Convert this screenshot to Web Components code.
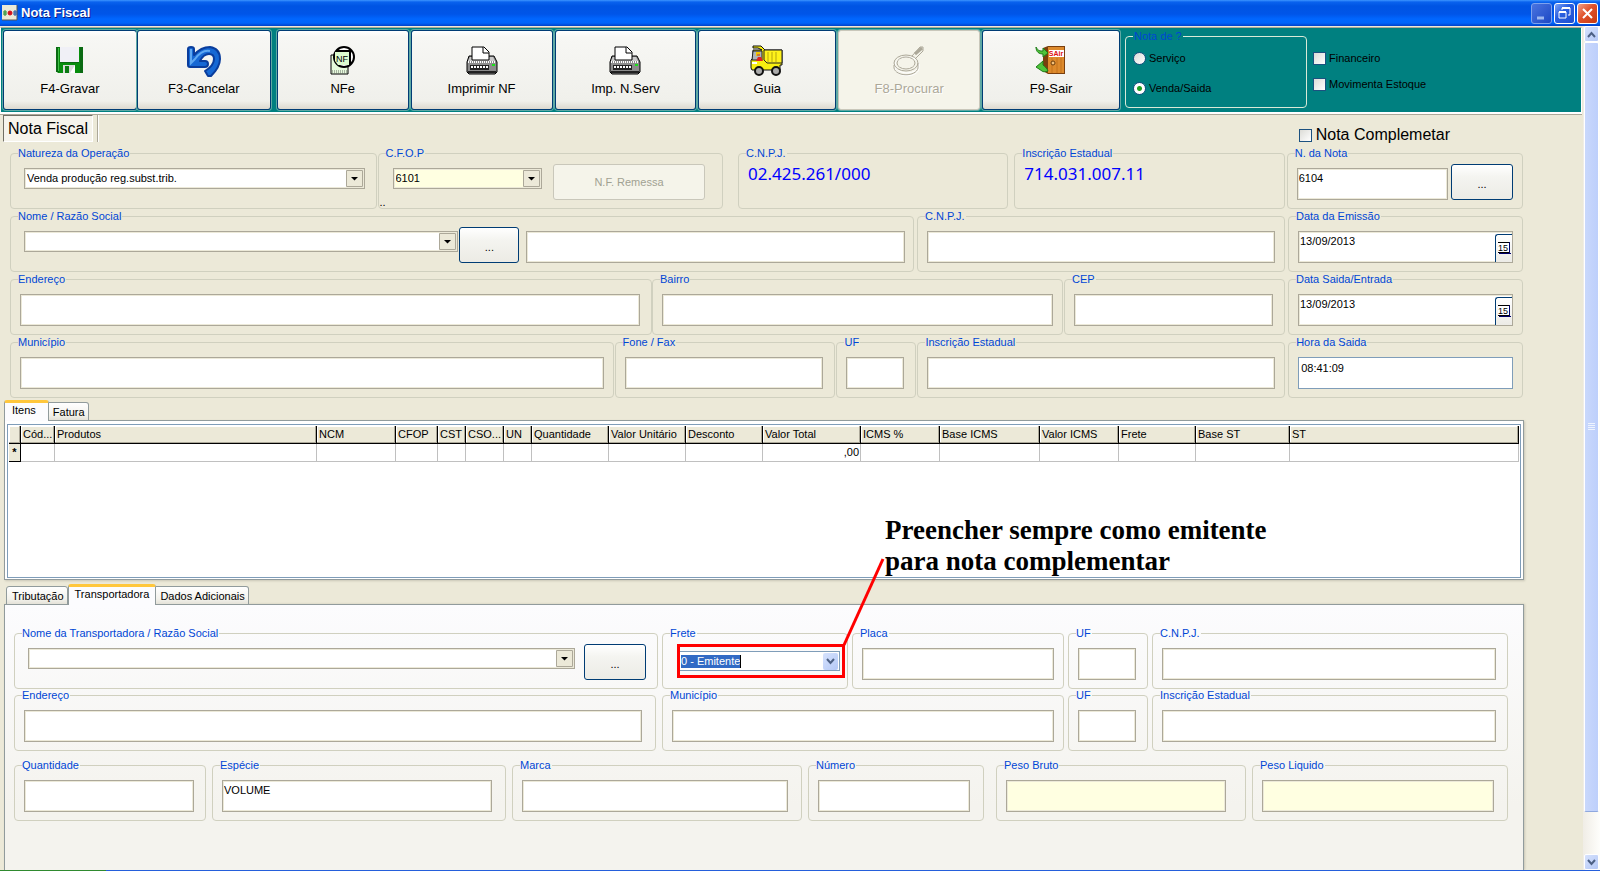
<!DOCTYPE html>
<html lang="pt-BR">
<head>
<meta charset="utf-8">
<title>Nota Fiscal</title>
<style>
html, body { margin: 0; height: 100%; }
body { font: 11px/13px "Liberation Sans", Arial, sans-serif; color: #000; background: #ece9d8; }
</style>
</head>
<body>
<nota-window></nota-window>

<script>
const define = (name, html, setup) => {
  const tpl = document.createElement('template');
  tpl.innerHTML = html;
  customElements.define(name, class extends HTMLElement {
    constructor() {
      super();
      this.attachShadow({ mode: 'open' });
    }
    connectedCallback() {
      if (this.shadowRoot.childNodes.length) return;
      this.shadowRoot.append(tpl.content.cloneNode(true));
      if (setup) setup(this, this.shadowRoot);
    }
  });
};

const ICONS = {
  save: `<svg width="28" height="30" viewBox="0 0 28 30"><path d="M0 2h27v26H2l-2-2z" fill="#078d0d"/><path d="M0 2h3v25H0zM24 2h3v26h-3z" fill="#0a6a12"/><path d="M2 3h1v23H2z" fill="#41c04a"/><path d="M4 2h19v15H4z" fill="#f0f0f6"/><path d="M4 17h19v1H4z" fill="#0a6a12"/><path d="M7 20h12v8H7z" fill="#d9dad9"/><path d="M9 21h4v7H9z" fill="#0a7a12"/><path d="M14 28l5-8v8z" fill="#fff"/></svg>`,
  undo: `<svg width="34" height="32" viewBox="0 0 34 32"><path d="M1 4q0-2 3-2t3 2v6C13 3 18 2 23 2c7 1 10 6 10 12 0 7-4 12-9 17h-3l-3-5c5-3 9-7 9-12 0-3-2-5-5-5-4 0-7 3-9 7h5q3 0 3 3t-3 3H3q-2 0-2-2z" fill="#1668d4" stroke="#0a3d9c" stroke-width="2" stroke-linejoin="round"/><path d="M4 4v14l4-4c5-7 10-9 15-8" fill="none" stroke="#5fa8f2" stroke-width="2"/></svg>`,
  nfe: `<svg width="26" height="30" viewBox="0 0 26 30"><path d="M1 10h17v19H1z" fill="#e6fbdc" stroke="#000"/><path d="M2 26h15M2 28h15" stroke="#666" stroke-dasharray="1 1"/><circle cx="14" cy="12" r="10" fill="#fff" stroke="#000" stroke-width="2"/><path d="M5 7h14v13H8l-3-4z" fill="#dcfccf"/><path d="M6 6h14v14" fill="none" stroke="#000" stroke-width="2"/><text x="12" y="17" text-anchor="middle" font-family="Liberation Sans, sans-serif" font-size="9" fill="#000">NF</text></svg>`,
  printer: `<svg width="32" height="30" viewBox="0 0 32 30"><path d="M3 11h25l3 6v10l-2 2H3l-2-2V17z" fill="#8c8c8c" stroke="#000"/><path d="M4 12h23l2 4H2z" fill="#c9c9c9"/><path d="M6 15V2h12l5 5v8z" fill="#fff" stroke="#000"/><path d="M17 2v6h6" fill="#fff" stroke="#000"/><path d="M2 17h28" stroke="#fff" stroke-dasharray="1 1" stroke-width="2"/><path d="M4 20h19v5H4z" fill="#222"/><path d="M5 22h17" stroke="#fff" stroke-width="2" stroke-dasharray="2 1"/><path d="M26 19h3v2h-3z" fill="#1ae01a"/><path d="M2 27h28" stroke="#222" stroke-width="2"/></svg>`,
  truck: `<svg width="34" height="32" viewBox="0 0 34 32"><path d="M3 1h8l4 4h17v15h-2v5H2l-1-2v-8l2-2V5h9L8 3H3z" fill="#f8ee10" stroke="#111"/><path d="M14 5h18v13H17l-3-3z" fill="#fff21a" stroke="#222"/><path d="M18 7v10M22 7v10M26 7v10" stroke="#b5a510"/><path d="M3 6h9v9H2z" fill="#aeb4b8" stroke="#222"/><path d="M8 12h3l2 4H6z" fill="#e02020"/><path d="M6 7h4v4H6z" fill="#f2c600"/><path d="M7 9h3v2H7z" fill="#c87a3a"/><path d="M2 17h5v2H2z" fill="#fff"/><circle cx="9" cy="26" r="4" fill="#aaa" stroke="#111" stroke-width="2"/><circle cx="26" cy="26" r="4" fill="#aaa" stroke="#111" stroke-width="2"/></svg>`,
  search: `<svg width="34" height="32" viewBox="0 0 34 32"><g id="g" fill="none" stroke="#fff" transform="translate(1 1)"><ellipse cx="14" cy="19" rx="12" ry="8"/><path d="M2 20v3c2 9 22 9 24 0v-5"/></g><g fill="none" stroke="#aca899"><ellipse cx="14" cy="18" rx="12" ry="8"/><ellipse cx="14" cy="18" rx="9" ry="6"/><path d="M2 20v3c2 9 22 9 24 0v-5"/><path d="M20 11l8-9h3v4l-8 8"/><path d="M23 9l7-6" stroke-width="3"/></g></svg>`,
  exit: `<svg width="32" height="32" viewBox="0 0 32 32"><path d="M8 3l5-2h17v28H13l-5-3z" fill="#7a3f0e"/><path d="M13 2h16v26H13z" fill="#dd8a2c"/><path d="M17 13v15M22 13v15M26 13v15" stroke="#c4721a"/><path d="M14 5h15v7H14z" fill="#fff"/><text x="21" y="11" text-anchor="middle" font-family="Liberation Sans, sans-serif" font-weight="bold" font-size="7" fill="#e01010">SAir</text><circle cx="18" cy="18" r="2" fill="#f5c27a" stroke="#6a3a0a"/><path d="M1 2c2 4 4 4 7 4V3l5 5-5 4V9C4 9 1 7 1 2zM13 26c-3 1-5 1-6 0l-6-4 7-6v4c2 2 4 3 5 6z" fill="#4fc43a" stroke="#1f7d1a"/></svg>`
};

/* Blue caption bar with the three window buttons */
define('title-bar', `
<style>
:host { display: flex; align-items: center; height: 26px; padding: 0 2px; box-sizing: border-box; flex: none;
  background: linear-gradient(#3d95ff 0, #0a62ee 2px, #0054e3 6px, #0055e8 14px, #0066ff 19px, #0064fa 23px, #0040c8 26px); }
h1 { margin: 0 auto 0 3px; font: bold 13px/18px "Liberation Sans", Arial, sans-serif; color: #fff; text-shadow: 1px 1px #0a1883; }
button { width: 21px; height: 21px; padding: 0; margin-left: 2px; border: 1px solid #fff; border-radius: 3px;
  background: linear-gradient(135deg, #7fa5f5, #2a5fe0 40%, #1d4fd0); display: grid; place-items: center; }
.min { background: linear-gradient(135deg, #4a74e0, #1c48c4); border-color: #7da2ee; }
.close { background: linear-gradient(135deg, #f0a088, #e0512a 45%, #c63a12); }
svg { display: block; }
</style>
<svg width="16" height="16" viewBox="0 0 16 16"><path d="M0 0h15v15H0z" fill="#ece9d8"/><path d="M15 0v15H0" fill="none" stroke="#555"/><path d="M3 5v6M1 7h4M1 9h4" stroke="#1d8a2a"/><circle cx="8" cy="8" r="2" fill="#d4101c" stroke="#d4101c"/><path d="M13 5v6M11 7h4M11 9h4" stroke="#1a4fa0"/></svg>
<h1><slot></slot></h1>
<button class="min" aria-label="Minimizar"><svg width="15" height="15"><path d="M3 12h7" stroke="#9db8f0" stroke-width="3"/></svg></button>
<button aria-label="Restaurar"><svg width="15" height="15" fill="none" stroke="#fff"><path d="M5 4V2h8v7h-2"/><path d="M5 2h8" stroke-width="2"/><path d="M2 6h7v6H2z"/><path d="M2 6h7" stroke-width="2"/></svg></button>
<button class="close" aria-label="Fechar"><svg width="15" height="15" stroke="#fff" stroke-width="2"><path d="M3 3l9 9M12 3l-9 9"/></svg></button>`);

/* Large toolbar button: icon over caption */
define('tool-button', `
<style>
:host { display: block; flex: var(--w) 1 0; min-width: 0; margin-left: var(--gap, 2px); }
button { width: 100%; height: 80px; padding: 14px 0 0; display: flex; flex-direction: column; align-items: center;
  font: 13px/16px "Liberation Sans", Arial, sans-serif; color: #000; border: 1px solid #003c74; border-radius: 3px;
  background: linear-gradient(#fff 0, #f7f7f4 6px, #f0f0eb 70px, #dcd9cf 78px); box-shadow: 0 0 0 1px #5fa9a4; box-sizing: border-box; }
button:disabled { color: #aca899; text-shadow: 1px 1px #fff; background: #f5f4ea; border-color: #c9c7ba; }
.icon { height: 36px; display: flex; align-items: flex-start; justify-content: center; }
</style>
<button><span class="icon"></span><slot></slot></button>`,
(el, root) => {
  root.querySelector('.icon').innerHTML = ICONS[el.getAttribute('icon')];
  root.querySelector('button').disabled = el.hasAttribute('disabled');
});

/* Tick box or radio with its caption */
define('xp-choice', `
<style>
:host { display: block; }
label { display: flex; align-items: center; gap: var(--choice-gap, 3px); }
input { appearance: none; margin: 0; width: 13px; height: 13px; flex: none; box-sizing: border-box;
  border: 1px solid #1c5180; background: linear-gradient(135deg, #dcdcd7, #fff); }
input[type=radio] { border-radius: 50%; }
input[type=radio]:checked { background: radial-gradient(circle, #21a121 0 2px, #fff 3px); }
</style>
<label><input><slot></slot></label>`,
(el, root) => {
  const i = root.querySelector('input');
  i.type = el.getAttribute('type');
  i.checked = el.hasAttribute('checked');
});

/* Bordered push button */
define('xp-button', `
<style>
:host { display: block; flex: none; width: 62px; margin-top: -4px; }
button { width: 100%; height: 36px; padding: 4px 0 0; font: inherit; line-height: 13px; color: #000;
  border: 1px solid #003c74; border-radius: 3px; background: linear-gradient(#fff, #f4f4f0 12px, #ecebe5); }
button:disabled { color: #a1a192; border-color: #c9c7ba; background: #f5f4ea; padding: 0; }
</style>
<button><slot></slot></button>`,
(el, root) => { root.querySelector('button').disabled = el.hasAttribute('disabled'); });

/* Captioned group holding one control, with a slot for whatever follows it */
define('nf-field', `
<style>
:host { display: block; position: relative; flex: var(--w) 1 0; min-width: 0; margin-left: var(--gap, 1px); }
fieldset { margin: 0; min-width: 0; height: 62px; box-sizing: border-box; padding: 8px var(--end, 11px) 0 7px;
  border: 1px solid #d0d0bf; border-radius: 4px; }
legend { padding: 0 1px 0 0; height: 13px; line-height: 13px; color: #0046d5; white-space: nowrap; }
.body { display: flex; align-items: flex-start; padding-left: var(--start, 2px); }
input.box { flex: 1; min-width: 0; width: 0; height: 32px; box-sizing: border-box; margin: 0; padding: 2px 2px 14px 1px; font: inherit; line-height: 14px;
  color: #000; background: #fff; border: 1px solid #aca899; box-shadow: inset 0 0 0 1px #ece9d8; border-radius: 0; outline: 0; }
:host([tone=cream]) input.box, :host([tone=cream]) .combo { background: #ffffe1; }
:host([tone=blue]) input.box { border-color: #7f9db9; box-shadow: none; padding: 3px 3px 13px 2px; }
.combo { flex: var(--cw, 1) 1 0; min-width: 0; display: flex; height: 21px; box-sizing: border-box; border: 1px solid #aca899; background: #fff;
  box-shadow: inset 0 0 0 1px #ece9d8; position: relative; }
select { appearance: none; flex: 1; min-width: 0; border: 0; margin: 0; padding: 0 20px 0 2px; background: transparent; font: inherit; color: #000; }
.combo svg { position: absolute; right: 1px; top: 1px; pointer-events: none; }
.date { flex: 1; display: flex; position: relative; }
.date button { position: absolute; right: 1px; top: 3px; width: 17px; height: 28px; padding: 0; border: 1px solid #003c74; border-width: 1px 0 0 1px; border-radius: 3px 0 0 0;
  background: linear-gradient(#fff, #ecebe6); display: grid; place-items: center; }
.mark { flex: 1; box-sizing: border-box; height: 34px; margin: -4px 0 0; padding: 4px 2px 4px 0; border: 3px solid #f00; display: flex; }
.edit { flex: 1; display: flex; align-items: center; height: 20px; box-sizing: border-box; border: 1px solid #7f9db9; border-left: 0; background: #fff; padding: 0 1px; }
.edit input { field-sizing: content; width: auto; margin: 0 auto 0 0; padding: 0; border: 0; border-right: 1px solid #000; background: #316ac5; color: #fff; font: inherit; outline: 0; }
.edit button { width: 15px; height: 17px; padding: 0; border: 0; border-radius: 2px; background: linear-gradient(135deg, #d6e2fd, #b4c8f6); display: grid; place-items: center; }
.body:has(output) { margin-top: -4px; }
output { font: 17px/20px "Noto Sans", sans-serif; color: #00f; white-space: nowrap; }
</style>
<fieldset><legend><label for="c"></label></legend><div class="body"><slot></slot></div></fieldset>
<slot name="note"></slot>`,
(el, root) => {
  const v = el.getAttribute('value') || '';
  const kinds = {
    input: `<input class="box" id="c" value="${v}">`,
    combo: `<span class="combo"><select id="c"><option>${v}</option></select><svg width="17" height="17"><path d="M.5.5h16v16H.5z" fill="#ece9d8" stroke="#aca899"/><path d="M5 7h7L8.500 10.500z" fill="#000"/></svg></span>`,
    date: `<span class="date"><input class="box" id="c" value="${v}"><button aria-label="Calendário"><svg width="13" height="13"><path d="M0 0h11v12H0z" fill="#fff"/><path d="M0 .5h12M0 10.500h12" stroke="#000"/><path d="M1 11.500h12M11.500 0v12" stroke="#00006a"/><text x="5" y="9" text-anchor="middle" font-size="9" font-family="Liberation Sans, sans-serif">15</text></svg></button></span>`,
    edit: `<span class="mark"><span class="edit"><input id="c" role="combobox" aria-expanded="false" aria-controls="c" value="${v}"><button aria-label="Abrir lista"><svg width="9" height="7" fill="none" stroke="#4d6185" stroke-width="2"><path d="M1 1l3.500 4L8 1"/></svg></button></span></span>`,
    output: `<output id="c">${v}</output>`
  };
  root.querySelector('label').textContent = el.getAttribute('label');
  root.querySelector('.body').insertAdjacentHTML('afterbegin', kinds[el.getAttribute('kind') || 'input']);
});

define('field-row', `
<style>:host { display: flex; align-items: flex-start; }</style><slot></slot>`);

/* Row of page tabs above a panel */
define('tab-strip', `
<style>
:host { display: block; }
div { display: flex; align-items: flex-end; height: 21px; padding-left: var(--inset, 0); position: relative; z-index: 1; margin-bottom: -1px; }
button { height: 19px; box-sizing: border-box; padding: 2px 3px 0 4px; font: inherit; line-height: 13px; color: #000; white-space: nowrap;
  border: 1px solid #919b9c; border-left-width: 0; border-radius: 0 3px 0 0; background: linear-gradient(#fff, #f3f2ec 12px, #e4e2d8); }
button:first-child { border-left-width: 1px; padding-left: 5px; border-radius: 3px 3px 0 0; }
button[aria-selected=true] { height: 21px; padding: 0 6px 4px; border: 1px solid #919b9c; border-bottom: 0; border-top: 3px solid #ffc73c; border-radius: 3px 3px 0 0;
  background: #fcfcfe; box-shadow: inset 0 1px #fcfcfe; }
button[aria-selected=true]:first-child { padding: 0 12px 4px 7px; }
</style>
<div role="tablist"></div>`,
(el, root) => {
  const on = +el.getAttribute('selected');
  root.querySelector('div').innerHTML = el.getAttribute('tabs').split('|')
    .map((t, i) => `<button role="tab" aria-selected="${i === on}">${t}</button>`).join('');
});

/* Item grid */
define('item-grid', `
<style>
:host { display: block; height: 160px; box-sizing: border-box; padding: 3px 2px; border: 1px solid #919b9c; background: #fff; box-shadow: 1px 1px 2px #c9c6b6; }
.frame { height: 154px; box-sizing: border-box; border: 1px solid #7f9db9; padding: 1px; }
table { width: 100%; border-collapse: separate; border-spacing: 0; table-layout: fixed; }
th, td { box-sizing: border-box; padding: 0 1px 0 2px; text-align: left; font-weight: normal; white-space: nowrap; overflow: hidden; text-overflow: clip; }
th { height: 18px; background: #ece9d8; border-right: 1px solid #000; border-bottom: 1px solid #000; box-shadow: inset -1px -1px #aca899, inset 1px 1px #fff; }
td { height: 18px; border-right: 1px solid #c0c0c0; border-bottom: 1px solid #c0c0c0; }
td:first-child { background: #ece9d8; border-color: #000; text-align: center; font-weight: bold; padding: 0; }
.num { text-align: right; }
</style>
<div class="frame"><table><colgroup></colgroup><thead><tr></tr></thead><tbody><tr></tr></tbody></table></div>`,
(el, root) => {
  const cols = [['', 12], ['Cód...', 34], ['Produtos', 262], ['NCM', 79], ['CFOP', 42], ['CST', 28], ['CSO...', 38], ['UN', 28],
    ['Quantidade', 77], ['Valor Unitário', 77], ['Desconto', 77], ['Valor Total', 98], ['ICMS %', 79], ['Base ICMS', 100],
    ['Valor ICMS', 79], ['Frete', 77], ['Base ST', 94], ['ST', 229]];
  root.querySelector('colgroup').innerHTML = cols.map(c => `<col style="width:${c[1]}px">`).join('');
  root.querySelector('thead tr').innerHTML = cols.map(c => `<th>${c[0]}</th>`).join('');
  root.querySelector('tbody tr').innerHTML = cols.map((c, i) =>
    i === 0 ? '<td>*</td>' : c[0] === 'Valor Total' ? '<td class="num">,00</td>' : '<td></td>').join('');
});

/* Red leader line and remark attached to a field */
define('nota-callout', `
<style>
:host { position: absolute; left: 0; top: 0; z-index: 2; pointer-events: none; }
svg { position: absolute; left: 179px; top: -70px; }
p { position: absolute; left: 223px; top: -112px; margin: 0; font: bold 27px/31px "Liberation Serif", "Times New Roman", serif; color: #000; white-space: nowrap; }
</style>
<svg width="44" height="90"><path d="M42 2L3 88" stroke="#f00" stroke-width="3"/></svg>
<p><slot></slot></p>`);

define('xp-scrollbar', `
<style>
:host { display: flex; flex-direction: column; width: 17px; flex: none; box-sizing: border-box; padding: 0 1px; background: linear-gradient(90deg, #f0ede6, #fefefb); }
button { width: 15px; height: 16px; flex: none; padding: 0; border: 1px solid #fff; border-radius: 2px; background: linear-gradient(135deg, #d6e2fd, #b4c8f6); display: grid; place-items: center; }
.track { flex: 1; display: flex; flex-direction: column; }
.thumb { flex: 768 1 0; box-sizing: border-box; border: 1px solid #fff; border-bottom-color: #8fa8de; border-radius: 2px; background: linear-gradient(90deg, #c9d8fc, #bdcffb); display: grid; place-items: center; }
.rest { flex: 42 1 0; }
</style>
<button aria-label="Para cima"><svg width="9" height="7" fill="none" stroke="#4d6185" stroke-width="2"><path d="M1 6l3.500-4L8 6"/></svg></button>
<div class="track"><div class="thumb"><svg width="7" height="8" stroke="#eef4fe"><path d="M0 .5h7M0 2.500h7M0 4.500h7M0 6.500h7"/></svg></div><div class="rest"></div></div>
<button aria-label="Para baixo"><svg width="9" height="7" fill="none" stroke="#4d6185" stroke-width="2"><path d="M1 1l3.500 4L8 1"/></svg></button>`);

define('tool-strip', `
<style>
:host { display: flex; height: 87px; box-sizing: border-box; padding: 2px 0 0 2px; background: #008080; border: 1px solid #fff; border-top-color: #aca899; border-bottom-width: 2px; box-shadow: 0 1px #aca899; }
.buttons { display: flex; flex: 1117 1 0; min-width: 0; }
.options { display: flex; flex: 461 1 0; min-width: 0; }
fieldset { margin: 0 0 0 5px; box-sizing: border-box; width: 182px; height: 78px; padding: 9px 7px; border: 1px solid #d8ead8; border-radius: 4px; }
legend { color: #0046d5; height: 13px; padding: 0 1px; }
fieldset xp-choice + xp-choice { margin-top: 17px; }
.checks { padding: 22px 0 0 6px; }
.checks xp-choice + xp-choice { margin-top: 13px; }
</style>
<div class="buttons">
<tool-button icon="save" style="--w:134;--gap:0px">F4-Gravar</tool-button>
<tool-button icon="undo" style="--w:134;--gap:0px">F3-Cancelar</tool-button>
<tool-button icon="nfe" style="--w:132;--gap:6px">NFe</tool-button>
<tool-button icon="printer" style="--w:142">Imprimir NF</tool-button>
<tool-button icon="printer" style="--w:142">Imp. N.Serv</tool-button>
<tool-button icon="truck" style="--w:138">Guia</tool-button>
<tool-button icon="search" disabled style="--w:142">F8-Procurar</tool-button>
<tool-button icon="exit" style="--w:138">F9-Sair</tool-button>
</div>
<div class="options">
<fieldset><legend>Nota de ?</legend>
<xp-choice type="radio">Serviço</xp-choice>
<xp-choice type="radio" checked>Venda/Saida</xp-choice></fieldset>
<div class="checks"><xp-choice type="checkbox">Financeiro</xp-choice><xp-choice type="checkbox">Movimenta Estoque</xp-choice></div>
</div>`);

define('nota-window', `
<style>
:host { display: flex; flex-direction: column; min-height: 100vh; }
.client { flex: 1; display: flex; }
main { flex: 1; min-width: 0; display: flex; flex-direction: column; padding: 1px 1px 0 0; }
.bar { display: flex; align-items: flex-start; height: 33px; box-sizing: border-box; padding: 1px 58px 0 3px; }
.page { width: 90px; height: 27px; padding: 0; font: 16px/20px "Liberation Sans", Arial, sans-serif; color: #000; background: #f6f4ec; border: 1px solid #fff; border-top-color: #716f64; border-left-color: #716f64; }
.sep { width: 1px; height: 27px; margin-left: 4px; background: #aca899; border-right: 1px solid #fff; }
.compl { margin: 10px 74px 0 auto; font-size: 16px; line-height: 20px; --choice-gap: 4px; }
.head { display: grid; row-gap: 1px; padding: 0 59px 2px 10px; }
.sheet { padding: 0 58px 0 4px; }
.lower { flex: 1; display: flex; flex-direction: column; margin-top: 4px; }
.panel { flex: 1; box-sizing: border-box; padding: 22px 15px 20px 9px; border: 1px solid #919b9c; border-bottom: 0; background: linear-gradient(#fcfcfe, #f4f3ee 200px); box-shadow: 1px 0 2px #c9c6b6; }
.panel field-row:last-child { margin-top: 8px; }
.task { height: 1px; flex: none; background: linear-gradient(90deg, #2f8a2f 106px, #245edb 106px); }
.dots { position: absolute; left: 2px; bottom: 0; }
</style>
<title-bar>Nota Fiscal</title-bar>
<div class="client">
<main>
<tool-strip></tool-strip>
<div class="bar"><button class="page">Nota Fiscal</button><span class="sep"></span><xp-choice class="compl" type="checkbox">Nota Complemetar</xp-choice></div>
<div class="head">
<field-row>
<nf-field kind="combo" label="Natureza da Operação" value="Venda produção reg.subst.trib." style="--w:366;--gap:0px;--start:6px"></nf-field>
<nf-field kind="combo" tone="cream" label="C.F.O.P" value="6101" style="--w:345;--start:7px;--end:17px;--cw:150"><xp-button disabled style="width:152px;margin-left:11px">N.F. Remessa</xp-button><span slot="note" class="dots">..</span></nf-field>
<nf-field kind="output" label="C.N.P.J." value="02.425.261/000" style="--w:270;--gap:15px"></nf-field>
<nf-field kind="output" label="Inscrição Estadual" value="714.031.007.11" style="--w:270;--gap:6px"></nf-field>
<nf-field label="N. da Nota" value="6104" style="--w:236;--gap:2px;--end:9px"><xp-button style="margin-left:3px">...</xp-button></nf-field>
</field-row>
<field-row>
<nf-field kind="combo" label="Nome / Razão Social" style="--w:904;--gap:0px;--start:6px;--end:8px;--cw:434"><xp-button style="width:60px;margin-left:1px">...</xp-button><slot-input></slot-input></nf-field>
<nf-field label="C.N.P.J." style="--w:368;--gap:3px;--end:9px"></nf-field>
<nf-field kind="date" label="Data da Emissão" value="13/09/2013" style="--w:235;--gap:3px;--end:9px"></nf-field>
</field-row>
<field-row>
<nf-field label="Endereço" style="--w:642;--gap:0px"></nf-field>
<nf-field label="Bairro" style="--w:411;--gap:0px;--end:9px"></nf-field>
<nf-field label="CEP" style="--w:221"></nf-field>
<nf-field kind="date" label="Data Saida/Entrada" value="13/09/2013" style="--w:235;--gap:3px;--end:9px"></nf-field>
</field-row>
<field-row>
<nf-field label="Município" style="--w:604;--gap:0px;--end:9px"></nf-field>
<nf-field label="Fone / Fax" style="--w:221"></nf-field>
<nf-field label="UF" style="--w:80"></nf-field>
<nf-field label="Inscrição Estadual" style="--w:368;--end:9px"></nf-field>
<nf-field tone="blue" label="Hora da Saida" value="08:41:09" style="--w:235;--gap:3px;--end:9px"></nf-field>
</field-row>
</div>
<div class="sheet"><tab-strip tabs="Itens|Fatura" selected="0"></tab-strip><item-grid></item-grid></div>
<div class="sheet lower"><tab-strip tabs="Tributação|Transportadora|Dados Adicionais" selected="1" style="--inset:2px"></tab-strip>
<div class="panel">
<field-row>
<nf-field kind="combo" label="Nome da Transportadora / Razão Social" style="--w:644;--gap:0px;--start:6px"><xp-button style="margin-left:9px">...</xp-button></nf-field>
<nf-field kind="edit" label="Frete" value="0 - Emitente" style="--w:186;--gap:4px;--start:7px;--end:2px"><nota-callout slot="note">Preencher sempre como emitente<br>para nota complementar</nota-callout></nf-field>
<nf-field label="Placa" style="--w:212;--gap:4px;--end:9px"></nf-field>
<nf-field label="UF" style="--w:80;--gap:4px"></nf-field>
<nf-field label="C.N.P.J." style="--w:356;--gap:4px"></nf-field>
</field-row>
<field-row>
<nf-field label="Endereço" style="--w:642;--gap:0px;--end:13px"></nf-field>
<nf-field label="Município" style="--w:402;--gap:6px;--end:9px"></nf-field>
<nf-field label="UF" style="--w:80;--gap:4px"></nf-field>
<nf-field label="Inscrição Estadual" style="--w:356;--gap:4px"></nf-field>
</field-row>
<field-row>
<nf-field label="Quantidade" style="--w:192;--gap:0px"></nf-field>
<nf-field label="Espécie" value="VOLUME" style="--w:294;--gap:6px;--end:13px"></nf-field>
<nf-field label="Marca" style="--w:290;--gap:6px;--end:13px"></nf-field>
<nf-field label="Número" style="--w:176;--gap:6px;--end:13px"></nf-field>
<nf-field tone="cream" label="Peso Bruto" style="--w:250;--gap:12px;--end:19px"></nf-field>
<nf-field tone="cream" label="Peso Liquido" style="--w:256;--gap:6px;--end:13px"></nf-field>
</field-row>
</div></div>
</main>
<xp-scrollbar></xp-scrollbar>
</div>
<div class="task"></div>`);

/* Second text box that shares a group with a combo */
define('slot-input', `
<style>
:host { display: flex; flex: 380 1 0; min-width: 0; margin-left: 7px; }
input { flex: 1; min-width: 0; height: 32px; box-sizing: border-box; padding: 2px 2px 14px; font: inherit; border: 1px solid #aca899; box-shadow: inset 0 0 0 1px #ece9d8; background: #fff; }
</style>
<input aria-label="Razão Social">`);
</script>
</body>
</html>
